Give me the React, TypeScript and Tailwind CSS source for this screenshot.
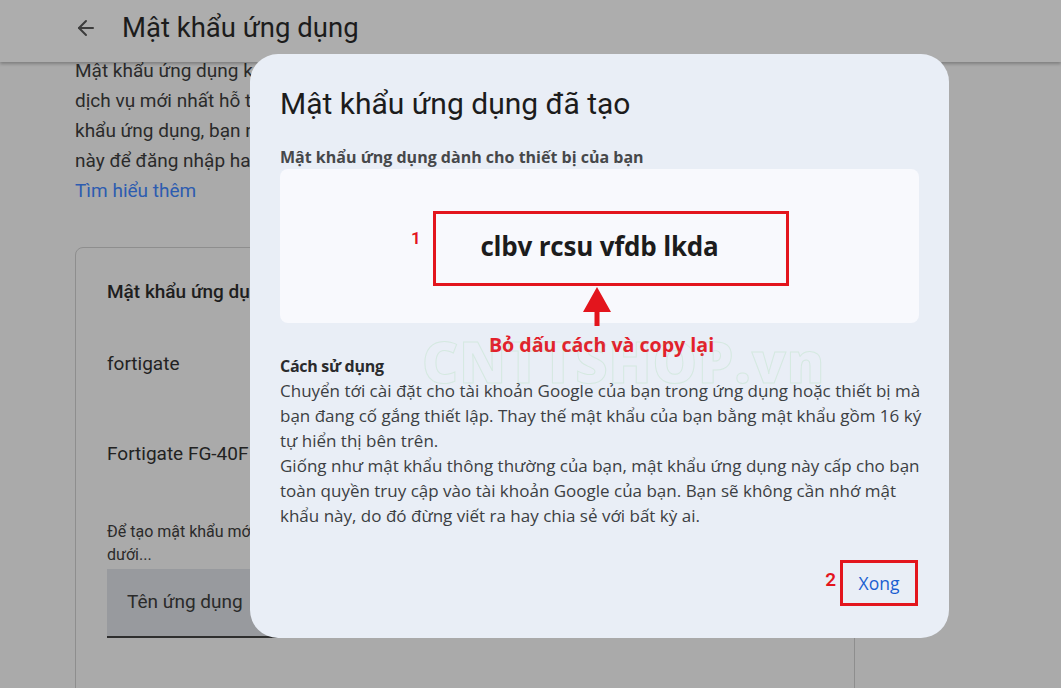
import { ArrowLeft } from "lucide-react";

const bgLines = [
  "Mật khẩu ứng dụng kém an toàn hơn so với việc sử dụng các ứng dụng và",
  "dịch vụ mới nhất hỗ trợ các tiêu chuẩn bảo mật hiện đại. Trước khi tạo mật",
  "khẩu ứng dụng, bạn nên kiểm tra xem ứng dụng của bạn có cần mật khẩu",
  "này để đăng nhập hay không.",
];

const usageLines = [
  "Chuyển tới cài đặt cho tài khoản Google của bạn trong ứng dụng hoặc thiết bị mà",
  "bạn đang cố gắng thiết lập. Thay thế mật khẩu của bạn bằng mật khẩu gồm 16 ký",
  "tự hiển thị bên trên.",
  "Giống như mật khẩu thông thường của bạn, mật khẩu ứng dụng này cấp cho bạn",
  "toàn quyền truy cập vào tài khoản Google của bạn. Bạn sẽ không cần nhớ mật",
  "khẩu này, do đó đừng viết ra hay chia sẻ với bất kỳ ai.",
];

const openSans = "[font-family:'Open_Sans','Noto_Sans',sans-serif]";

function Page() {
  return (
    <div className="flex h-full flex-col">
      <header className="relative z-10 flex h-[62px] shrink-0 items-center bg-[#adadad] pb-[6px] pl-[74px] shadow-[0_2px_3px_rgba(0,0,0,0.25)]">
        <ArrowLeft className="h-6 w-6 text-[#3d3d3d]" strokeWidth={2} />
        <h1 className="ml-[24px] text-[27.5px] leading-[32px] text-[#1c1c1c]">
          Mật khẩu ứng dụng
        </h1>
      </header>

      <main className="-mt-[6px] flex flex-col pl-[75px]">
        <div className="w-[780px] overflow-hidden text-[19px] leading-[30px] text-[#2a2a2a]">
          {bgLines.map((line) => (
            <p key={line} className="whitespace-nowrap">
              {line}
            </p>
          ))}
          <a className="text-[#2d5cb0]">Tìm hiểu thêm</a>
        </div>

        <section className="mt-[41px] h-[500px] w-[780px] rounded-lg border border-[#8e8e8e] px-[31px] pt-[30px]">
          <h2 className="text-[19px] font-medium leading-[28px] text-[#1e1e1e]">
            Mật khẩu ứng dụng của bạn
          </h2>
          <p className="mt-[44px] text-[19px] leading-[28px] text-[#222]">fortigate</p>
          <p className="mt-[62px] text-[19px] leading-[28px] text-[#222]">
            Fortigate FG-40F
          </p>
          <p className="mt-[52px] text-[16px] leading-[23px] text-[#2b2b2b]">
            Để tạo mật khẩu mới cho ứng dụng, hãy nhập tên cho mật khẩu đó ở bên
            <br />
            dưới...
          </p>
          <div className="mt-[3px] flex h-[69px] w-[500px] items-center border-b-2 border-[#2e2e2e] bg-[#989a9e] pl-[20px] text-[19px] text-[#2a2a2a]">
            Tên ứng dụng
          </div>
        </section>
      </main>
    </div>
  );
}

function UpArrow() {
  return (
    <svg width="30" height="40" viewBox="0 0 30 40" className="absolute left-[302px] top-[118px]">
      <path d="M15 0 L29 25 L17.5 25 L17.5 39 L12.5 39 L12.5 25 L1 25 Z" fill="#e3151d" />
    </svg>
  );
}

function Dialog() {
  return (
    <div className="absolute left-[250px] top-[54px] z-20 flex h-[584px] w-[699px] flex-col rounded-[28px] bg-[#e9eef6] pl-[30px] pr-[30px] pt-[32px]">
      <h2 className="text-[30px] leading-[36px] text-[#1c1c1c]">Mật khẩu ứng dụng đã tạo</h2>
      <p className={`${openSans} mt-[25px] text-[16px] font-bold leading-[20px] text-[#46484a]`}>
        Mật khẩu ứng dụng dành cho thiết bị của bạn
      </p>

      <div className="relative mt-[2px] flex h-[154px] w-[639px] items-center justify-center rounded-lg bg-[#f8f9fd]">
        <span className={`${openSans} text-[26px] font-bold tracking-[-0.2px] text-[#1c1c1c]`}>
          clbv rcsu vfdb lkda
        </span>
        <div className="absolute left-[153px] top-[42px] h-[75px] w-[356px] border-[3px] border-[#e3151d]" />
        <span className="absolute left-[131px] top-[59px] text-[17px] font-semibold leading-[20px] text-[#e3151d]">
          1
        </span>
        <UpArrow />
      </div>

      <p className={`${openSans} relative mt-[11px] pl-[4px] text-center text-[19.6px] font-bold leading-[22px] text-[#e3202b]`}>
        Bỏ dấu cách và copy lại
      </p>

      <div className={`${openSans} relative`}>
        <span className="pointer-events-none absolute left-[142px] -top-[28px] select-none whitespace-nowrap text-[56px] font-black leading-[66px] tracking-[1px] text-transparent [-webkit-text-stroke:1px_rgba(120,210,130,0.18)]">
          CNTTSHOP.vn
        </span>
        <h3 className="relative text-[16px] font-bold leading-[20px] tracking-[-0.3px] text-[#2a2b2d]">
          Cách sử dụng
        </h3>
        <div className="relative mt-[2px] text-[17px] leading-[25px] text-[#3c3f43]">
          {usageLines.map((line) => (
            <p key={line} className="whitespace-nowrap">
              {line}
            </p>
          ))}
        </div>
      </div>

      <div className="mt-auto flex items-center justify-end pb-[32px] pr-[1px]">
        <span className="mr-[4px] mt-[-5px] text-[19px] font-semibold text-[#e3151d]">2</span>
        <button className={`${openSans} flex h-[46px] w-[78px] items-center justify-center border-[3px] border-[#e3151d] text-[17.5px] text-[#1b5fd1]`}>
          Xong
        </button>
      </div>
    </div>
  );
}

export default function App() {
  return (
    <div
      className="relative h-[688px] w-[1061px] overflow-hidden bg-[#aaaaaa]"
      style={{ fontFamily: "Roboto, 'Noto Sans', sans-serif" }}
    >
      <Page />
      <Dialog />
    </div>
  );
}
